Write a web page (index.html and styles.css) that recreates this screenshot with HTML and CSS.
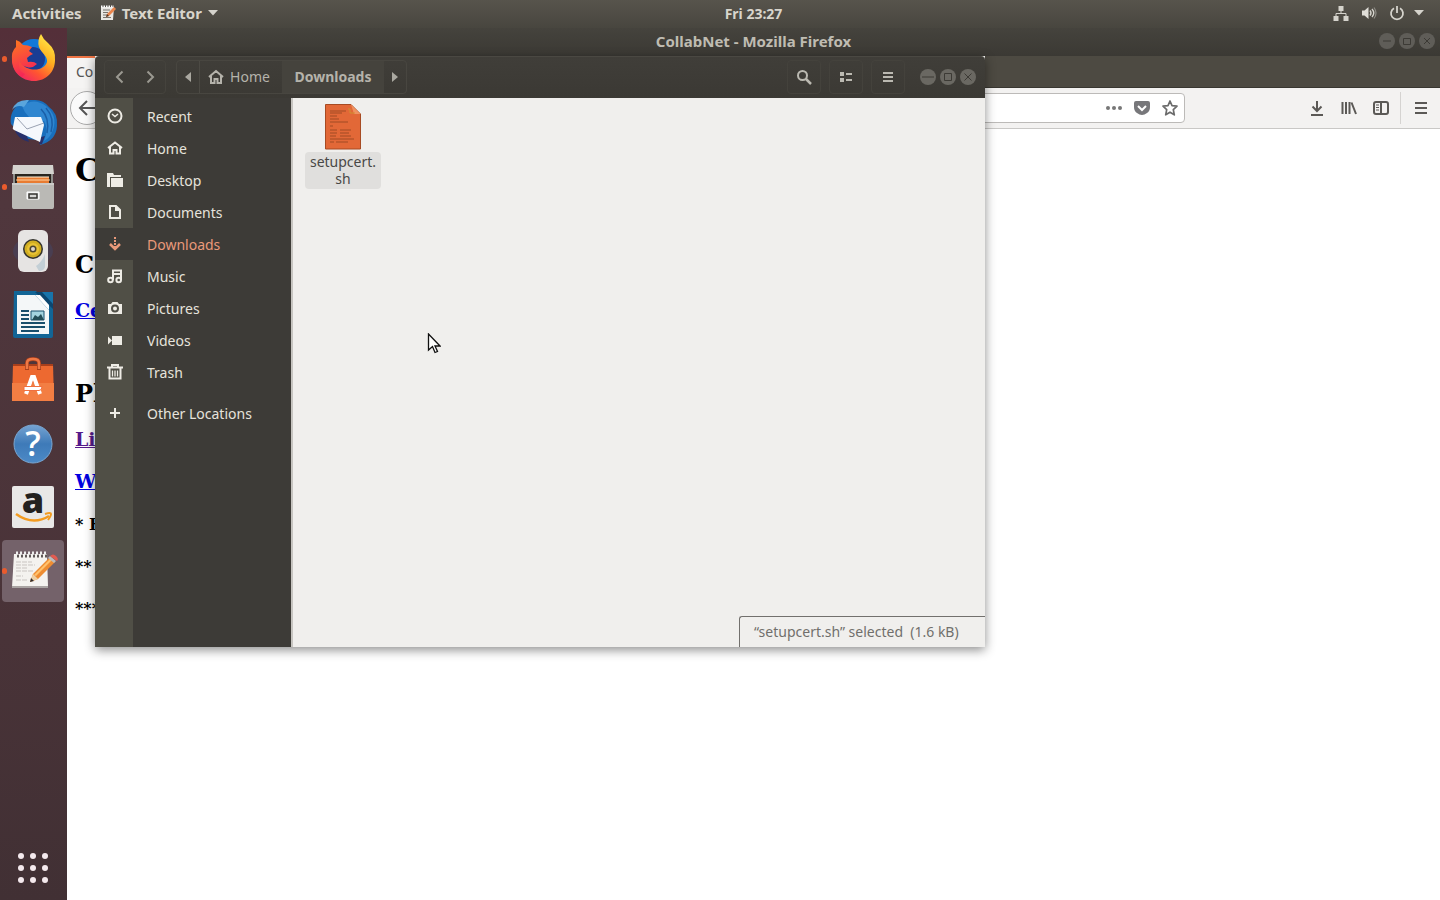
FILE: index.html
```html
<!DOCTYPE html>
<html lang="en">
<head>
<meta charset="utf-8">
<title>Desktop</title>
<link rel="stylesheet" href="styles.css">
</head>
<body>
<div class="desktop">
  <header class="topbar">
    <div class="topbar-left">
      <button class="top-item">Activities</button>
      <button class="top-item app-menu">
        <svg width="16" height="16" viewBox="0 0 16 16"><path d="M1 2h13l-1 13H1z" fill="#e9e7e3"/><path d="M1 1.5h13" stroke="#fff" stroke-width="2" stroke-dasharray="1.5 1"/><path d="M3 5h7M3 7.500h5M3 10h4M3 12.500h8" stroke="#77736c"/><path d="M6 12l1-3 7-7 2 2-7 7z" fill="#e9854d"/><path d="M6 12l1-3 2 2z" fill="#4b3427"/></svg>
        <span>Text Editor</span>
        <svg width="10" height="6" viewBox="0 0 10 6"><path d="M0 0h10L5 5.500z" fill="#d5d3cc"/></svg>
      </button>
    </div>
    <time class="clock">Fri 23:27</time>
    <button class="top-item tray" aria-label="System menu">
      <svg width="16" height="16" viewBox="0 0 16 16" fill="#d5d3cc"><path d="M5.500 1h5v5h-5zM.5 11h5v5h-5zM10.500 11h5v5h-5z"/><path d="M8 6v3M3 11V8.500h10V11" fill="none" stroke="#d5d3cc"/></svg>
      <svg width="16" height="16" viewBox="0 0 16 16"><path d="M1 5.500h2.500L7.500 2v12L3.500 10.500H1z" fill="#e0ded8"/><path d="M9 5.500q2 2.500 0 5M11 4q3.500 4 0 8" fill="none" stroke="#d5d3cc" stroke-width="1.400"/><path d="M13 2.500q4 5.500 0 11" fill="none" stroke="#8b8982" stroke-width="1.200"/></svg>
      <svg width="16" height="16" viewBox="0 0 16 16" fill="none" stroke="#d5d3cc" stroke-width="1.800"><path d="M5 3.200a6 6 0 1 0 6 0M8 1v7"/></svg>
      <svg class="tray-arrow" width="10" height="6" viewBox="0 0 10 6"><path d="M0 0h10L5 5.500z" fill="#d5d3cc"/></svg>
    </button>
  </header>

  <div class="workspace">
    <nav class="dock" aria-label="Dock">
      <button class="dock-app running" aria-label="Firefox">
        <svg viewBox="0 0 62 62"><defs><linearGradient id="ffy" x1=".9" y1="0" x2=".2" y2="1"><stop offset="0" stop-color="#fff44f"/><stop offset=".4" stop-color="#ffb020"/><stop offset=".7" stop-color="#ff5630"/><stop offset="1" stop-color="#f0206a"/></linearGradient><linearGradient id="ffo" x1="0" y1="0" x2=".3" y2="1"><stop offset="0" stop-color="#ff7a1c"/><stop offset="1" stop-color="#f52657"/></linearGradient></defs><circle cx="32" cy="29" r="18" fill="#1279d8"/><circle cx="31" cy="31" r="12" fill="#193d94"/><path d="M37 19Q35 12 39 6q2 5 7 9 8 7 7 17c0 12-9 21-21 21C20 53 10 44 10 32c0-7 3-11 6-14 0 16 4 21 12 23 8 2 15-1 17-7 1-6-6-9-8-15z" fill="url(#ffy)"/><path d="M10 33q-1-10 4-14l0-7q4 1 7 5 5 0 9 2l-3 4 4 3q-3 1-6 4l1 4q6-1 9 2-5 5-10 3-7-1-7-6-4 9 5 13l-3 3q-8-4-10-16z" fill="url(#ffo)"/></svg>
      </button>
      <button class="dock-app" aria-label="Thunderbird">
        <svg viewBox="0 0 62 62"><path d="M9 32C7 18 17 8 31 8q10-1 16 7 9 6 8 19-1 15-17 19l2-4-18-3z" fill="#196fbd"/><path d="M20 14q12-9 24 0 12 10 7 24-3 8-9 11 5-12 0-20-9 0-15-4-5-5-7-11z" fill="#2f86d0"/><path d="M44 16q9 10 5 24M39 17q9 9 6 24" fill="none" stroke="#1a5fa8" stroke-width="1.500"/><path d="M22 15q-7-3-12 3Q14 7 27 8z" fill="#5aa5dc"/><path d="M12 36q3 11 15 14l-2-6zM39 45l4-1-3 8h-3z" fill="#27306b"/><path d="M13 25l26 0 3 8-4 17-26-12q-2-1-1-3z" fill="#f5f8fc"/><path d="M15 26l10 11 17-6" fill="none" stroke="#9aa2b2"/></svg>
      </button>
      <button class="dock-app running" aria-label="Files">
        <svg viewBox="0 0 62 62"><path d="M11 9h40v44H11z" fill="#8f8f8b"/><path d="M11 9h40l1 9H10z" fill="#d4d3cf"/><path d="M13 18h36v10H13z" fill="#29251f"/><path d="M15 21h32v7H15z" fill="#e87c32"/><path d="M15 21h32" stroke="#fff0d7"/><path d="M14 24h34" stroke="#ffd3a2"/><path d="M10 27h42v24q0 2-2 2H12q-2 0-2-2z" fill="#bab9b5"/><path d="M10 28h42" stroke="#ddd"/><path d="M25 36h12v7H25z" fill="#eee" stroke="#fff"/><path d="M27 38h8v4h-8z" fill="#d7d6d4" stroke="#35332f" stroke-width="1.500"/></svg>
      </button>
      <button class="dock-app" aria-label="Rhythmbox">
        <svg viewBox="0 0 62 62"><ellipse cx="31" cy="31" rx="20" ry="14" fill="#493e51"/><rect x="16" y="10" width="30" height="42" rx="6" fill="#e6e4e3"/><path d="M34 46q6-4 9-12v13q-1 4-6 4z" fill="#c3cfd6"/><circle cx="31" cy="29" r="10" fill="#34332e"/><circle cx="31" cy="29" r="8.500" fill="#d0ad22"/><circle cx="31" cy="29" r="6" fill="#e8c233"/><circle cx="31" cy="29" r="3.500" fill="#4c4530"/><circle cx="31" cy="29" r="2" fill="#dcd5cc"/></svg>
      </button>
      <button class="dock-app" aria-label="LibreOffice Writer">
        <svg viewBox="0 0 62 62"><path d="M12 7h22l17 17v28q0 2-2 2H13q-2 0-2-2z" fill="#126596"/><path d="M33 8h18v17z" fill="#0c466f"/><path d="M40 8h11v12z" fill="#1874aa"/><path d="M15 11h18l14 15v24H15z" fill="#f4f7f8"/><path d="M33 11l14 15v-5L38 11z" fill="#fff"/><path d="M19 27h8M19 31h8M19 35h8M19 39h24M19 43h24M19 47h18" stroke="#194f6c" stroke-width="2"/><path d="M29 27h13v9H29z" fill="#a4d3df" stroke="#194f6c"/><path d="M30 36l3-5 3 2 3-3 3 6z" fill="#244d57"/></svg>
      </button>
      <button class="dock-app" aria-label="Ubuntu Software">
        <svg viewBox="0 0 62 62"><path d="M11 16h40l1 36q0 1-1 1H11q-1 0-1-1z" fill="#ed6930"/><path d="M11 16h40v2H11z" fill="#a83f1c"/><path d="M10 35h42v18H10z" fill="#f37e43"/><path d="M25 22v-7q0-4 6-4t6 4v7" fill="none" stroke="#a83f1c" stroke-width="4"/><path d="M25 21v-6q0-4 6-4t6 4v6" fill="none" stroke="#ee7846" stroke-width="2.500"/><path d="M24 46l6-17h2l6 17" fill="none" stroke="#fff" stroke-width="4"/><path d="M22 38.500h18q0 4-3 4H22z" fill="#fff" stroke="#ee7040"/></svg>
      </button>
      <button class="dock-app" aria-label="Help">
        <svg viewBox="0 0 62 62"><defs><linearGradient id="help" x2="0" y2="1"><stop stop-color="#75a3d2"/><stop offset=".5" stop-color="#3e7ab8"/><stop offset="1" stop-color="#4c8ac7"/></linearGradient></defs><circle cx="31" cy="32" r="19" fill="url(#help)" stroke="#7aa7d2"/><text x="31" y="44" text-anchor="middle" class="help-mark">?</text></svg>
      </button>
      <button class="dock-app" aria-label="Amazon">
        <svg viewBox="0 0 62 62"><rect x="10" y="10" width="42" height="42" rx="2" fill="#e9e8e7"/><text x="31" y="37" text-anchor="middle" class="amazon-mark">a</text><path d="M14 38q17 12 33 2" fill="none" stroke="#f39b20" stroke-width="2.500"/><path d="M43 38q6-2 6 0t-3 6" fill="none" stroke="#f39b20" stroke-width="2"/></svg>
      </button>
      <button class="dock-app running active" aria-label="Text Editor">
        <svg viewBox="0 0 62 62"><path d="M12 14h33l1 33H10z" fill="#f4f2ef"/><path d="M10 47h36" stroke="#aaa4a3" stroke-width="2"/><path d="M15 16h30" stroke="#5f5959" stroke-width="3" stroke-dasharray="2 2"/><path d="M14 13h31" stroke="#eee" stroke-width="3" stroke-dasharray="2 2"/><path d="M14 22h16M14 25h19M14 28h12M14 31h17M14 36h7M14 40h12" stroke="#c9c4c1" stroke-dasharray="5 1"/><path d="M28 42l3-8 17-17 5 5-17 17z" fill="#ee8c32"/><path d="M32 35l17-17 2 1-17 17z" fill="#ffc16d"/><path d="M28 42l3-8 5 5z" fill="#edd0a5"/><path d="M28 42l1-4 3 3z" fill="#332c2a"/><path d="M46 18l2-2 6 5-2 2z" fill="#bbb"/><path d="M48 16q3-3 6 0t1 5z" fill="#e15c51"/></svg>
      </button>
      <button class="dock-app show-apps" aria-label="Show Applications">
        <svg viewBox="0 0 62 62" fill="#f4e9ed"><circle cx="19" cy="19" r="3"/><circle cx="31" cy="19" r="3"/><circle cx="43" cy="19" r="3"/><circle cx="19" cy="31" r="3"/><circle cx="31" cy="31" r="3"/><circle cx="43" cy="31" r="3"/><circle cx="19" cy="43" r="3"/><circle cx="31" cy="43" r="3"/><circle cx="43" cy="43" r="3"/></svg>
      </button>
    </nav>

    <section class="browser" aria-label="Browser">
      <div class="browser-title">
        <h1 class="window-title">CollabNet - Mozilla Firefox</h1>
        <div class="window-controls dim">
          <button aria-label="Minimize"><svg viewBox="0 0 16 16"><path d="M4 8h8"/></svg></button>
          <button aria-label="Maximize"><svg viewBox="0 0 16 16"><path d="M4.500 5.500h7v6h-7z"/></svg></button>
          <button aria-label="Close"><svg viewBox="0 0 16 16"><path d="M5 5l6 6M11 5l-6 6"/></svg></button>
        </div>
      </div>
      <div class="tab-strip"><button class="tab">Co</button></div>
      <div class="toolbar">
        <button class="back" aria-label="Go back"><svg width="20" height="20" viewBox="0 0 20 20"><path d="M10 3l-7 7 7 7M3 10h16" fill="none" stroke="#555" stroke-width="2"/></svg></button>
        <div class="url-bar">
          <input class="url-input" type="text" aria-label="Address">
          <button aria-label="Page actions"><svg width="18" height="18" viewBox="0 0 18 18" fill="#777"><circle cx="3" cy="9" r="2"/><circle cx="9" cy="9" r="2"/><circle cx="15" cy="9" r="2"/></svg></button>
          <button aria-label="Save to Pocket"><svg width="18" height="18" viewBox="0 0 18 18"><path d="M3 2h12q2 0 2 2v4q0 4-3 6-5 4-10 0-3-2-3-6V4q0-2 2-2z" fill="#77777a"/><path d="M5 7l4 4 4-4" fill="none" stroke="#fff" stroke-width="2"/></svg></button>
          <button aria-label="Bookmark"><svg width="18" height="18" viewBox="0 0 18 18"><path d="M9 2l2 4.700 5 .5-3.700 3.500 1 5.100L9 13.200l-4.300 2.600 1-5.100L2 7.200l5-.5z" fill="none" stroke="#6b6b6b" stroke-width="1.700" stroke-linejoin="round"/></svg></button>
        </div>
        <div class="toolbar-icons">
          <button aria-label="Downloads"><svg width="16" height="16" viewBox="0 0 16 16"><path d="M8 1v10M3.500 6.500L8 11l4.500-4.500M2 15h12"/></svg></button>
          <button aria-label="Library"><svg width="16" height="16" viewBox="0 0 16 16"><path d="M1.500 2v12M5 2v12M8.500 2v12M10.500 2.500L15 14" /></svg></button>
          <button aria-label="Sidebars"><svg width="16" height="16" viewBox="0 0 16 16"><rect x="1" y="2" width="14" height="12" rx="2"/><path d="M8 2v12"/><path d="M3 5h3M3 7.500h3M3 10h3" stroke-width="1"/></svg></button>
        </div>
        <button class="burger" aria-label="Open menu"><svg width="14" height="14" viewBox="0 0 14 14"><path d="M1 2h12M1 7h12M1 12h12"/></svg></button>
      </div>
      <main class="page">
        <h1>C</h1>
        <h2>C</h2>
        <h3><a href="#ce">Ce</a></h3>
        <h2 class="second">Pl</h2>
        <h3><a class="visited" href="#li">Li</a></h3>
        <h3><a href="#w">W</a></h3>
        <div class="notes">
          <h4>* F</h4>
          <h4>**</h4>
          <h4>***</h4>
        </div>
      </main>
    </section>
  </div>

  <section class="files" aria-label="Files">
    <header class="files-header">
      <div class="history">
        <button aria-label="Back"><svg width="16" height="16" viewBox="0 0 16 16"><path d="M10.500 2.500L5 8l5.500 5.500"/></svg></button>
        <button aria-label="Forward"><svg width="16" height="16" viewBox="0 0 16 16"><path d="M5.500 2.500L11 8l-5.500 5.500"/></svg></button>
      </div>
      <div class="path">
        <button class="path-arrow" aria-label="Previous folders"><svg width="6" height="10" viewBox="0 0 6 10"><path d="M6 0v10L0 5z" fill="#aaa8a0"/></svg></button>
        <button class="path-home"><svg width="16" height="16" viewBox="0 0 16 16"><path d="M1 8l7-6 7 6M3 7v7h3.500v-4h3v4H13V7" fill="none" stroke="#b5b3ab" stroke-width="2"/></svg><span>Home</span></button>
        <button class="path-current">Downloads</button>
        <button class="path-arrow" aria-label="Next folders"><svg width="6" height="10" viewBox="0 0 6 10"><path d="M0 0v10l6-5z" fill="#aaa8a0"/></svg></button>
      </div>
      <div class="files-tools">
        <button aria-label="Search"><svg width="16" height="16" viewBox="0 0 16 16" fill="none" stroke="#bbb9b1" stroke-width="2"><circle cx="6.500" cy="6.500" r="4.500"/><path d="M10 10l5 5" stroke-width="2.500"/></svg></button>
        <button aria-label="List view"><svg width="14" height="12" viewBox="0 0 14 12" fill="#bbb9b1"><path d="M1 1h4v4H1zM1 7h4v4H1zM7 2h6v2H7zM7 8h6v2H7z"/></svg></button>
        <button aria-label="Menu"><svg width="12" height="12" viewBox="0 0 12 12"><path d="M1 2h10M1 6h10M1 10h10" stroke="#bbb9b1" stroke-width="2"/></svg></button>
      </div>
      <div class="window-controls">
        <button aria-label="Minimize"><svg viewBox="0 0 16 16"><path d="M2 8h12"/></svg></button>
        <button aria-label="Maximize"><svg viewBox="0 0 16 16"><path d="M4.500 4.500h7v7h-7z"/></svg></button>
        <button aria-label="Close"><svg viewBox="0 0 16 16"><path d="M4.500 4.500l7 7M11.500 4.500l-7 7"/></svg></button>
      </div>
    </header>
    <div class="files-body">
      <nav class="places" aria-label="Places">
        <a class="place" href="#recent"><span class="place-icon"><svg viewBox="0 0 16 16"><circle cx="8" cy="8" r="6.500"/><path d="M5 6l3 2.500L11 6" stroke-width="1.500"/></svg></span>Recent</a>
        <a class="place" href="#home"><span class="place-icon"><svg viewBox="0 0 16 16"><path d="M1 8l7-5.500L15 8M3 7v6.500h3.500V10h3v3.500H13V7"/></svg></span>Home</a>
        <a class="place" href="#desktop"><span class="place-icon"><svg viewBox="0 0 16 16"><path d="M0 1h6l1 2h7v2H3v10H0zM4 6h12v9H4z" fill="#eeece5" stroke="none"/></svg></span>Desktop</a>
        <a class="place" href="#documents"><span class="place-icon"><svg viewBox="0 0 16 16"><path d="M3 2h6l4 4v8H3zM9 2v4h4"/></svg></span>Documents</a>
        <a class="place selected" href="#downloads"><span class="place-icon"><svg viewBox="0 0 16 16"><path d="M8 1v11" stroke-dasharray="2 1"/><path d="M3 8l5 5 5-5" stroke-width="2.500"/></svg></span>Downloads</a>
        <a class="place" href="#music"><span class="place-icon"><svg viewBox="0 0 16 16"><circle cx="3.500" cy="12" r="2.300"/><circle cx="11.700" cy="12" r="2.300"/><path d="M6 12V2.500h8V12M6 6h8"/></svg></span>Music</a>
        <a class="place" href="#pictures"><span class="place-icon"><svg viewBox="0 0 16 16"><path d="M1 4h3l1.500-2h5L12 4h3v10H1z" fill="#eeece5" stroke="none"/><circle cx="8" cy="8.500" r="3" stroke="#4f4e46"/></svg></span>Pictures</a>
        <a class="place" href="#videos"><span class="place-icon"><svg viewBox="0 0 16 16"><path d="M5 4h10v9H5zM1 4.500l4 4-4 4z" fill="#eeece5" stroke="none"/></svg></span>Videos</a>
        <a class="place" href="#trash"><span class="place-icon"><svg viewBox="0 0 16 16"><path d="M0 3.500h16M5 3V1h6v2M2.500 4v10.500h11V4"/><path d="M5.500 6.500v6M8 6.500v6M10.500 6.500v6" stroke-width="1.300"/></svg></span>Trash</a>
        <a class="place other" href="#other"><span class="place-icon"><svg viewBox="0 0 16 16"><path d="M8 3v10M3 8h10"/></svg></span>Other Locations</a>
      </nav>
      <div class="folder">
        <button class="file">
          <svg width="36" height="46" viewBox="0 0 36 46"><path d="M.5.500H26L35.500 10v35H.500z" fill="#e26837" stroke="#a74b23"/><path d="M26 .5L35.500 10H29z" fill="#ef9160"/><path d="M5 7h16M5 9h12M5 12h7M5 15h9M5 18h18M5 22h3M5 26h7M15 26h11M5 29h7M15 29h9M5 32h6M15 32h11M5 35h24M5 38h4M11 38h12" stroke="#a04a25"/><path d="M23 5h2v4h5" fill="none" stroke="#d09032"/></svg>
          <span class="file-name">setupcert.<br>sh</span>
        </button>
        <div class="status">“setupcert.sh” selected&nbsp; (1.6 kB)</div>
      </div>
    </div>
  </section>

  <svg class="pointer" width="14" height="22" viewBox="0 0 14 22"><path d="M1.500 1v16l4-3.500 2.500 6 2.500-1-2.500-5.500h5z" fill="#fff" stroke="#111" stroke-width="1.300"/></svg>
</div>
</body>
</html>
```
FILE: styles.css
```css
* { box-sizing: border-box; }
body { margin: 0; font-family: "Noto Sans", "Open Sans", sans-serif; font-size: 14px; }
button { margin: 0; padding: 0; border: 0; background: none; font: inherit; color: inherit; }
svg { display: block; flex: none; }
a { text-decoration: none; }

.desktop { position: relative; display: flex; flex-direction: column; min-height: 100vh; overflow: hidden; background: #fff; }

.topbar { display: grid; grid-template-columns: 1fr auto 1fr; align-items: center; height: 28px; padding: 0 16px 2px 12px; background: linear-gradient(#57544c, #48463f); color: #d8d5cc; font-weight: 700; }
.topbar-left { display: flex; gap: 18px; font-size: 15px; }
.app-menu { display: flex; align-items: center; gap: 6px; }
.clock { padding-left: 71px; }
.tray { display: flex; align-items: center; justify-self: end; gap: 12px; }
.tray-arrow { margin-left: -3px; }

.workspace { display: flex; flex: 1; }
.dock { display: flex; flex-direction: column; gap: 2px; width: 67px; padding: 0 0 1px 2px; background: linear-gradient(#542f39, #50373d 20%, #493338 70%, #413034); }
.dock-app { position: relative; width: 62px; height: 62px; border-radius: 4px; }
.dock-app svg { width: 62px; height: 62px; overflow: visible; }
.dock-app.active { background: #74626a; }
.dock-app.running::before { content: ""; position: absolute; left: 0; top: 28px; width: 5px; height: 6px; border-radius: 3px; background: #e95b2d; }
.show-apps { margin-top: auto; }
.help-mark { font: 600 34px "Open Sans", sans-serif; fill: #fff; }
.amazon-mark { font: 800 36px "Open Sans", sans-serif; fill: #24221f; }

.browser { display: flex; flex: 1; flex-direction: column; min-width: 0; }
.browser-title { display: grid; grid-template-columns: 1fr auto 1fr; align-items: center; height: 28px; padding: 0 5px 2px; background: linear-gradient(#45433d, #3b3934); color: #bfbcb2; }
.window-title { grid-column: 2; margin: 0; font-size: 15px; line-height: 20px; font-weight: 700; }
.window-controls { display: flex; gap: 4px; justify-self: end; }
.window-controls button { width: 16px; height: 16px; border-radius: 50%; background: #6a6862; }
.window-controls svg { width: 16px; height: 16px; fill: none; stroke: #3c3a35; stroke-width: 1; }
.window-controls.dim button { background: #5f5d58; }
.tab-strip { height: 32px; background: #4d4a42; border-bottom: 1px solid #393731; }
.tab { display: block; width: 220px; height: 32px; padding: 0 0 4px 9px; border-top: 2px solid #ee7444; background: #f5f4f3; color: #555; text-align: left; }
.toolbar { display: flex; align-items: center; height: 41px; padding-left: 3px; border-bottom: 1px solid #c9c8c6; background: #f3f2f1; }
.toolbar button { display: grid; place-items: center; }
.toolbar .back { width: 34px; height: 34px; border: 1px solid #aaa; border-radius: 50%; background: #fafafa; }
.url-bar { display: flex; flex: 1; align-items: center; gap: 10px; height: 30px; margin: 0 124px 0 200px; padding-right: 5px; border: 1px solid #bcbab8; border-radius: 4px; background: #fff; }
.url-input { flex: 1; min-width: 0; height: 26px; border: 0; background: none; }
.toolbar-icons { display: flex; gap: 16px; padding-right: 11px; }
.toolbar-icons svg, .burger svg { fill: none; stroke: #5b5956; stroke-width: 2; }
.toolbar .burger { width: 40px; height: 32px; border-left: 1px solid #d5d3d1; }

.page { flex: 1; padding: 20px 8px; background: #fff; color: #000; font-family: "DejaVu Serif", serif; }
.page h1 { margin: 0 0 58px; font-size: 32px; line-height: 42px; }
.page h2 { margin: 0 0 18px; font-size: 24px; line-height: 32px; }
.page h3 { margin: 0 0 20px; font-size: 19px; line-height: 22px; }
.page .second { margin-top: 57px; }
.notes { margin-top: 23px; }
.page h4 { margin: 0 0 22px; font-size: 16px; line-height: 20px; }
.page a { color: #0000e0; text-decoration: underline; }
.page .visited { color: #551a8b; }

.files { position: absolute; left: 95px; top: 56px; display: flex; flex-direction: column; width: 890px; height: 591px; background: #f0efed; box-shadow: 0 3px 10px rgba(0, 0, 0, .45); }
.files-header { display: flex; align-items: center; height: 42px; padding: 0 9px 2px; border-top: 1px solid #4a4842; border-radius: 4px 4px 0 0; background: linear-gradient(#403e39, #3b3934); color: #b5b3ab; }
.files-header button { display: flex; align-items: center; justify-content: center; }
.history { display: flex; width: 62px; height: 34px; border: 1px solid #45433d; border-radius: 4px; }
.history button { flex: 1; }
.history svg { fill: none; stroke: #9b9991; stroke-width: 2; }
.path { display: flex; height: 34px; margin-left: 10px; border: 1px solid #484640; border-radius: 4px; }
.path-arrow { width: 22px; }
.path-home { gap: 6px; width: 83px; padding-right: 4px; border-left: 1px solid #4c4a44; }
.path-current { width: 102px; background: #45433d; font-weight: 700; }
.files-tools { display: flex; gap: 8px; margin-left: auto; margin-right: 15px; }
.files-tools button { width: 34px; height: 34px; border: 1px solid #44423c; border-radius: 4px; }
.files-body { display: flex; flex: 1; }
.places { width: 198px; padding-top: 2px; border-right: 2px solid #c7c5c1; background: linear-gradient(90deg, #504f46 38px, #3d3b37 38px); }
.place { display: flex; align-items: center; gap: 13px; height: 32px; color: #e6e3dc; }
.place-icon { display: grid; place-items: center; width: 39px; height: 32px; padding-left: 1px; }
.place-icon svg { width: 16px; height: 16px; fill: none; stroke: #eeece5; stroke-width: 2; }
.selected { color: #e9997a; background: #3d3b37; }
.selected svg { stroke: #e9997a; }
.other { margin-top: 9px; }
.folder { display: flex; flex: 1; flex-direction: column; justify-content: space-between; }
.file { display: flex; flex-direction: column; align-items: center; gap: 2px; align-self: flex-start; width: 76px; margin: 6px 0 0 12px; color: #494846; }
.file-name { width: 76px; padding: 1px 0 2px; border-radius: 4px; background: #e0dfdd; line-height: 17px; }
.status { align-self: flex-end; width: 246px; height: 31px; padding-left: 14px; border: 1px solid #72706d; border-right: 0; border-bottom: 0; border-radius: 3px 0 0; color: #716f6c; line-height: 29px; white-space: nowrap; }
.pointer { position: absolute; left: 427px; top: 333px; }
```
